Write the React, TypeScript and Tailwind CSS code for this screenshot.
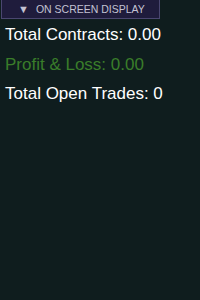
export default function App() {
  return (
    <div className="w-[200px] h-[300px] bg-[#0f1d1e] font-['Liberation_Sans',Arial,sans-serif]">
      <div className="pl-px">
        <button className="flex items-center h-[19px] w-[159px] bg-[#1f1c3c] border border-[#4a4770] border-t-0 text-[#c3c3d3] text-[10.5px] pl-[16px] gap-[7px] leading-none">
          <span className="text-[11px]">▼</span>
          <span>ON SCREEN DISPLAY</span>
        </button>
      </div>
      <div className="pl-[5px] text-[17px] leading-[19px] flex flex-col gap-[10.5px] pt-[6px]">
        <div className="text-white">Total Contracts: 0.00</div>
        <div className="text-[#3a7d2a]">Profit &amp; Loss: 0.00</div>
        <div className="text-white">Total Open Trades: 0</div>
      </div>
    </div>
  );
}
